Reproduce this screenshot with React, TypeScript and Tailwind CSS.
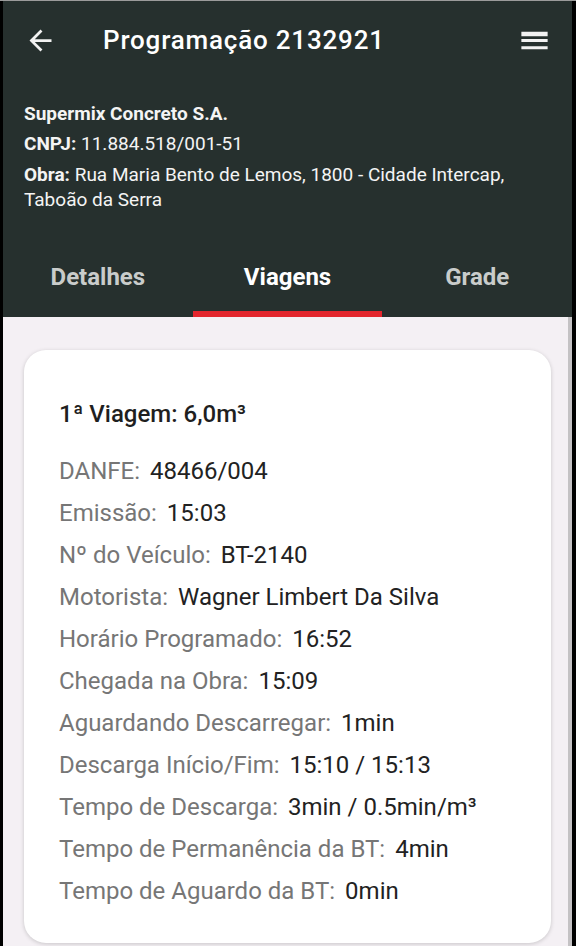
import React from "react";

const rows: { label: string; value: React.ReactNode }[] = [
  { label: "DANFE:", value: "48466/004" },
  { label: "Emissão:", value: "15:03" },
  { label: "Nº do Veículo:", value: "BT-2140" },
  { label: "Motorista:", value: "Wagner Limbert Da Silva" },
  { label: "Horário Programado:", value: "16:52" },
  { label: "Chegada na Obra:", value: "15:09" },
  { label: "Aguardando Descarregar:", value: "1min" },
  { label: "Descarga Início/Fim:", value: "15:10 / 15:13" },
  { label: "Tempo de Descarga:", value: "3min / 0.5min/m³" },
  { label: "Tempo de Permanência da BT:", value: "4min" },
  { label: "Tempo de Aguardo da BT:", value: "0min" },
];

function Tab(props: { label: string; active?: boolean }) {
  return (
    <div className="flex-1 flex flex-col items-center">
      <span
        className={
          "pt-[12px] text-[24px] leading-[30px] font-bold " +
          (props.active ? "text-white" : "text-[#c9cccb]")
        }
      >
        {props.label}
      </span>
      <div className={"mt-auto h-[6px] w-full " + (props.active ? "bg-[#e3262d]" : "")} />
    </div>
  );
}

export default function App() {
  return (
    <div className="h-[946px] w-[576px] overflow-hidden bg-black flex font-['Roboto',sans-serif] border-t border-[#9b9b9b]">
      <div className="ml-[3px] w-[569px] flex flex-col">
        {/* header */}
        <div className="bg-[#26302e] text-white">
          <div className="h-[79px] flex items-center">
            <svg className="ml-[21px] w-[33px] h-[33px]" viewBox="0 0 24 24" fill="#f2f2f2">
              <path d="M20 11H7.83l5.59-5.59L12 4l-8 8 8 8 1.41-1.41L7.83 13H20v-2z" />
            </svg>
            <h1 className="ml-[46px] text-[26px] font-medium tracking-[0.8px]">Programação 2132921</h1>
            <svg className="ml-auto mr-[20px] w-[35px] h-[35px]" viewBox="0 0 24 24" fill="#f2f2f2">
              <path d="M3 18h18v-2H3v2zm0-5h18v-2H3v2zm0-6v2h18V6H3z" />
            </svg>
          </div>

          <div className="mt-[19px] px-[21px] text-[19px] text-[#f4f4f4]">
            <p className="leading-[30px] font-bold">Supermix Concreto S.A.</p>
            <p className="leading-[30px]">
              <span className="font-bold">CNPJ:</span> 11.884.518/001-51
            </p>
            <p className="mt-[3px] leading-[25px]">
              <span className="font-bold">Obra:</span> Rua Maria Bento de Lemos, 1800 - Cidade Intercap,
              Taboão da Serra
            </p>
          </div>

          <div className="mt-[38px] h-[67px] flex">
            <Tab label="Detalhes" />
            <Tab label="Viagens" active />
            <Tab label="Grade" />
          </div>
        </div>

        {/* content */}
        <div className="relative flex-1 bg-[#f4f0f4] px-[21px] pt-[33px]">
          <div className="rounded-[22px] bg-white shadow-[0_1px_4px_rgba(0,0,0,0.18)] pl-[35px] pt-[49px] pb-[31px]">
            <h2 className="text-[24px] leading-[30px] font-medium text-[#1f1f1f]">1ª Viagem: 6,0m³</h2>
            <div className="mt-[21px] text-[24px]">
              {rows.map((r) => (
                <div key={r.label} className="leading-[42px] flex gap-[10px]">
                  <span className="text-[#767676]">{r.label}</span>
                  <span className="text-[#222222]">{r.value}</span>
                </div>
              ))}
            </div>
          </div>
          <div className="absolute right-0 top-0 bottom-0 w-[4px] bg-[#c4c2c4]" />
        </div>
      </div>
    </div>
  );
}
